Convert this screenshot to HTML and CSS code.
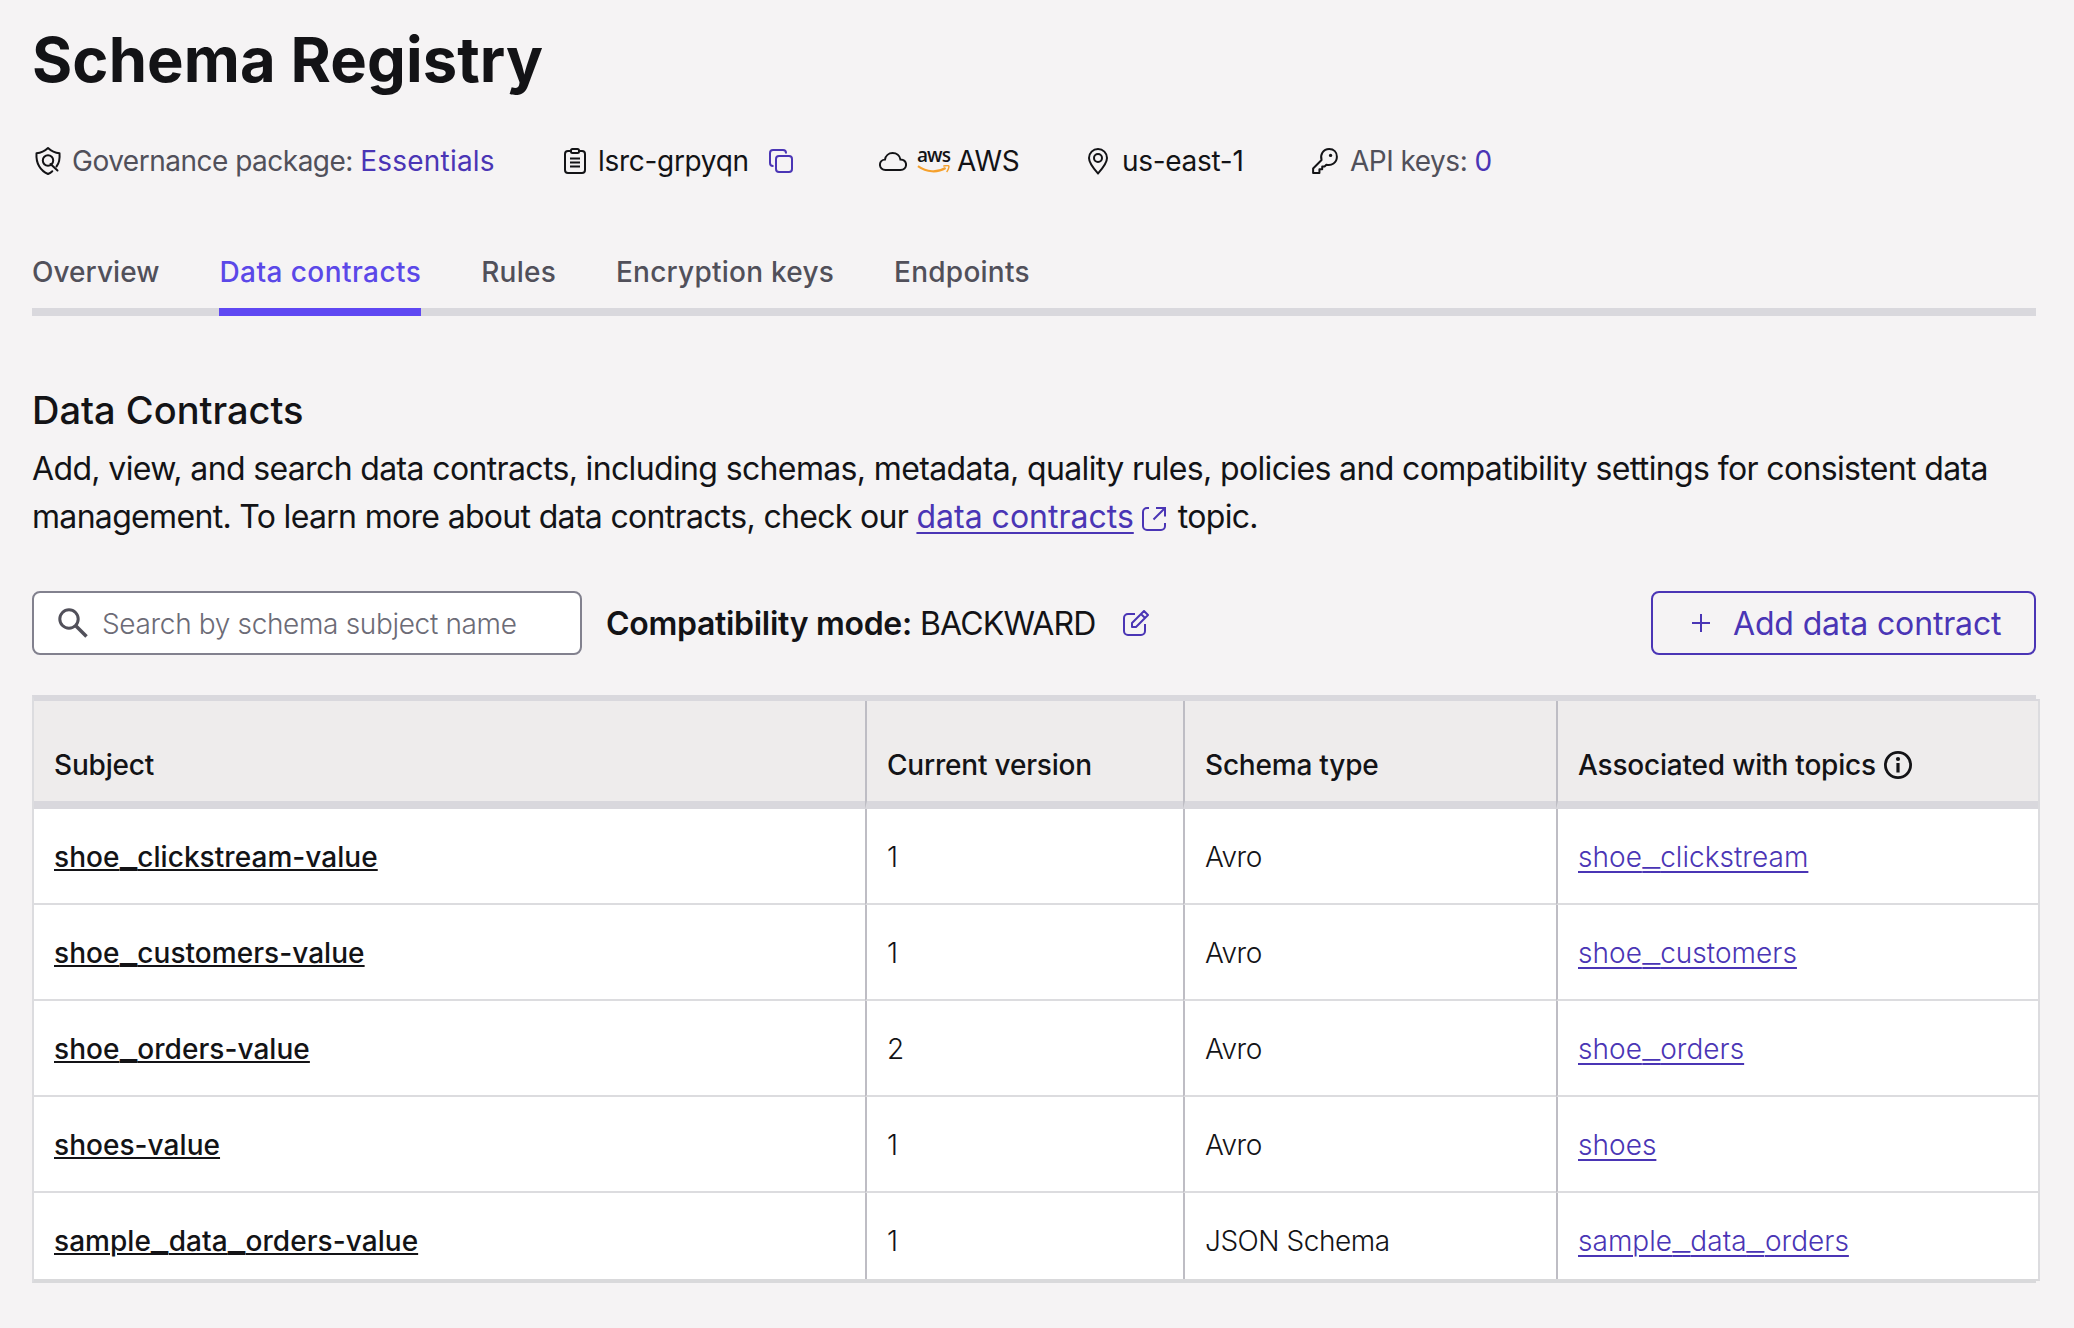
FILE: index.html
```html
<!DOCTYPE html>
<html lang="en">
<head>
<meta charset="utf-8">
<title>Schema Registry</title>
<link rel="stylesheet" href="styles.css">
</head>
<body>
<main class="page">
  <h1 class="title">Schema Registry</h1>

  <div class="meta">
    <div class="meta-item meta-governance">
      <svg class="icon" width="28" height="30" viewBox="0 0 28 30" fill="none" stroke="currentColor" stroke-width="2" stroke-linejoin="round" stroke-linecap="round"><path d="M22.500 20.500C25 17.500 26 13 25.500 7.200C21 6.800 17 4.800 14 2C11 4.800 7 6.800 2.500 7.200C1.800 17.500 6.500 25 14 28C15.600 27.300 17 26.400 18.300 25.200"/><circle cx="14" cy="14.500" r="5.200"/><path d="M16.500 18L23.500 24.500"/></svg>
      <span class="label">Governance package: <a class="value-link">Essentials</a></span>
    </div>
    <div class="meta-item meta-id">
      <svg class="icon" width="22" height="26" viewBox="0 0 22 26" fill="none" stroke="currentColor" stroke-width="2"><rect x="1" y="3" width="20" height="22" rx="3"/><rect x="7" y="1" width="8" height="4" rx="1.500" fill="#f5f3f4"/><path d="M6 10.500h10M6 14.500h10M6 18.500h10"/></svg>
      <span>lsrc-grpyqn</span>
      <svg class="icon copy" width="24" height="24" viewBox="0 0 24 24" fill="none" stroke="currentColor" stroke-width="2"><rect x="7" y="7" width="16" height="16" rx="3"/><path d="M4.500 17H4a3 3 0 0 1-3-3V4a3 3 0 0 1 3-3h10a3 3 0 0 1 3 3v.5"/></svg>
    </div>
    <div class="meta-item meta-cloud">
      <svg class="icon" width="28" height="19" viewBox="0 0 30 20" fill="none" stroke="currentColor" stroke-width="2.100"><path d="M7 19C3.500 19 1 16.700 1 13.500C1 10.500 3.200 8.200 6.400 8C7 4 10.300 1 14.600 1C18.900 1 22.200 3.800 22.900 7.800C26.500 8 29 10.200 29 13.500C29 16.700 26.500 19 23 19Z"/></svg>
      <span class="aws-logo"><span class="aws-word">aws</span><svg width="33" height="9" viewBox="0 0 34 9"><path d="M1 1C10 7.500 21 8 29.500 3" fill="none" stroke="#f5a02c" stroke-width="2.200"/><path d="M27 1C30 0.200 32.500 0.500 32.800 1C33.200 2 32 5.500 30.500 7" fill="none" stroke="#f5a02c" stroke-width="1.500"/></svg></span>
      <span>AWS</span>
    </div>
    <div class="meta-item meta-region">
      <svg class="icon" width="20" height="27" viewBox="0 0 20 27" fill="none" stroke="currentColor" stroke-width="2" stroke-linejoin="round"><path d="M10 25.500C7 22 1 15.500 1 10a9 9 0 0 1 18 0C19 15.500 13 22 10 25.500Z"/><circle cx="10" cy="10" r="4"/></svg>
      <span>us-east-1</span>
    </div>
    <div class="meta-item meta-keys">
      <svg class="icon" width="26" height="26" viewBox="0 0 28 28" fill="none" stroke="currentColor" stroke-width="2.150" stroke-linejoin="round"><path d="M10.300 13C8.500 7 12 1.200 18.500 1.200C23.500 1.200 26.800 4.500 26.800 9.500C26.800 16 21 19.500 15.500 18L13.500 20H11V23H8V26.800H1.200V22Z"/><circle cx="20" cy="8" r="1.800" fill="currentColor" stroke="none"/></svg>
      <span class="label">API keys: <a class="value-link">0</a></span>
    </div>
  </div>

  <nav class="tabs">
    <a class="tab tab-overview">Overview</a>
    <a class="tab tab-contracts active">Data contracts</a>
    <a class="tab tab-rules">Rules</a>
    <a class="tab tab-encryption">Encryption keys</a>
    <a class="tab tab-endpoints">Endpoints</a>
  </nav>

  <h2 class="section-title">Data Contracts</h2>
  <p class="description"><span class="line">Add, view, and search data contracts, including schemas, metadata, quality rules, policies and compatibility settings for consistent data</span> <span class="line line-two">management. To learn more about data contracts, check our <a class="doc-link">data contracts</a><svg class="external" width="24" height="24" viewBox="0 0 24 24" fill="none" stroke="currentColor" stroke-width="2"><path d="M7 1H5a4 4 0 0 0-4 4V19a4 4 0 0 0 4 4H19a4 4 0 0 0 4-4V16M14 1H23V9.500M23 1L11.500 12.500"/></svg><span>topic.</span></span></p>

  <div class="toolbar">
    <div class="search">
      <svg width="30" height="30" viewBox="0 0 30 30" fill="none" stroke="currentColor" stroke-width="3"><circle cx="11" cy="11" r="9.200"/><path d="M17.500 17.500L28.500 28.500" stroke-width="3.600"/></svg>
      <span>Search by schema subject name</span>
    </div>
    <div class="compat"><strong>Compatibility mode:</strong> <span>BACKWARD</span></div>
    <svg class="edit" width="26" height="26" viewBox="0 0 26 26" fill="none" stroke="currentColor" stroke-width="2" stroke-linejoin="round"><path d="M12 4H5a4 4 0 0 0-4 4V21a4 4 0 0 0 4 4H18a4 4 0 0 0 4-4V14M9 17V13L21 1L25 5L13 17ZM18 4L22 8"/></svg>
    <button class="add"><svg width="18" height="18" viewBox="0 0 18 18" stroke="currentColor" stroke-width="2"><path d="M9 0V18M0 9H18"/></svg><span>Add data contract</span></button>
  </div>

  <div class="table-frame">
    <table class="table">
      <colgroup><col class="c1"><col class="c2"><col class="c3"><col class="c4"></colgroup>
      <thead>
        <tr><th>Subject</th><th>Current version</th><th>Schema type</th><th><span class="with-icon">Associated with topics <svg width="28" height="28" viewBox="0 0 28 28" fill="none" stroke="currentColor" stroke-width="2.800"><circle cx="14" cy="14" r="12.600"/><path d="M14 12V21.500" stroke-width="3.200"/><circle cx="14" cy="8" r="2.100" fill="currentColor" stroke="none"/></svg></span></th></tr>
      </thead>
      <tbody>
        <tr><td><a class="subject">shoe<span class="u">_</span>clickstream-value</a></td><td>1</td><td>Avro</td><td><a class="topic">shoe<span class="u">_</span>clickstream</a></td></tr>
        <tr><td><a class="subject">shoe<span class="u">_</span>customers-value</a></td><td>1</td><td>Avro</td><td><a class="topic">shoe<span class="u">_</span>customers</a></td></tr>
        <tr><td><a class="subject">shoe<span class="u">_</span>orders-value</a></td><td>2</td><td>Avro</td><td><a class="topic">shoe<span class="u">_</span>orders</a></td></tr>
        <tr><td><a class="subject">shoes-value</a></td><td>1</td><td>Avro</td><td><a class="topic">shoes</a></td></tr>
        <tr><td><a class="subject">sample<span class="u">_</span>data<span class="u">_</span>orders-value</a></td><td>1</td><td>JSON Schema</td><td><a class="topic">sample<span class="u">_</span>data<span class="u">_</span>orders</a></td></tr>
      </tbody>
    </table>
  </div>
</main>
</body>
</html>
```

FILE: styles.css
```css
* { box-sizing: border-box; }
body {
  margin: 0;
  background: #f5f3f4;
  color: #131316;
  font-family: Inter, "Liberation Sans", sans-serif;
  font-size: 28px;
}
svg { display: block; flex: none; }
.page { width: 2036px; padding-left: 32px; display: flex; flex-direction: column; }
.title { margin: 22px 0 0; height: 76px; line-height: 76px; font-size: 61.5px; font-weight: 700; letter-spacing: 0.1px; white-space: nowrap; }

.meta { display: flex; align-items: center; height: 40px; margin-top: 43px; white-space: nowrap; letter-spacing: -0.3px; }
.meta-item { display: flex; align-items: center; gap: 12px; }
.label { color: #51505a; letter-spacing: -0.5px; }
.value-link { color: #4a35b5; letter-spacing: 0.2px; }
.meta-governance { width: 532px; padding-left: 2px; gap: 10px; }
.meta-id { width: 315px; }
.meta-id .copy { margin-left: 8px; color: #4a35b5; }
.meta-cloud { width: 209px; gap: 10px; }
.meta-region { width: 222px; gap: 14px; }
.meta-keys { padding-left: 2px; }
.aws-logo { width: 33px; margin-right: -3px; display: flex; flex-direction: column; font: 600 19px/15px "Open Sans", sans-serif; letter-spacing: -0.9px; }
.aws-word { height: 17px; }

.tabs { display: flex; gap: 60px; margin-top: 66px; height: 69px; border-bottom: 8px solid #d9d8dd; }
.tab { height: 69px; line-height: 51px; color: #51505a; font-weight: 500; letter-spacing: 0.24px; border-bottom: 8px solid transparent; white-space: nowrap; }
.tab-overview { letter-spacing: 0.05px; }
.tab.active { color: #5b48e8; letter-spacing: 0.43px; border-bottom-color: #5f48f2; }

.section-title { margin: 69px 0 0; height: 50px; line-height: 50px; font-size: 38px; font-weight: 500; white-space: nowrap; }
.description { margin: 10px 0 0; font-size: 32px; line-height: 48px; letter-spacing: -0.64px; white-space: nowrap; }
.line { display: flex; align-items: baseline; white-space: pre; }
.line-two { letter-spacing: -0.68px; }
.doc-link { color: #4a35b5; letter-spacing: 0; text-decoration: underline; text-decoration-thickness: 2px; text-underline-offset: 4px; }
.external { color: #4a35b5; margin: 4px 12px 0 8px; align-self: center; }

.toolbar { display: flex; align-items: center; margin-top: 50px; height: 64px; }
.search { width: 550px; height: 64px; border: 2px solid #82818e; border-radius: 8px; background: #fff; display: flex; align-items: center; gap: 14px; padding-left: 24px; color: #51505a; }
.search span { padding-top: 2px; color: #6c6b76; font-weight: 300; letter-spacing: -0.34px; white-space: nowrap; }
.compat { margin-left: 24px; font-size: 32px; letter-spacing: -0.85px; white-space: nowrap; }
.compat strong { font-weight: 600; letter-spacing: -0.3px; }
.edit { margin-left: 27px; color: #4a35b5; }
.add { margin-left: auto; width: 385px; height: 64px; border: 2px solid #4a35b5; border-radius: 8px; background: transparent; color: #4a35b5; font: 400 32px Inter, sans-serif; letter-spacing: -0.16px; display: flex; align-items: center; gap: 23px; padding: 0 0 0 39px; white-space: nowrap; }

.table-frame { margin-top: 40px; height: 588px; border-top: 4px solid #d9d8dd; border-bottom: 2px solid #d9d9db; border-left: 2px solid #dcdcdf; }
.table { table-layout: fixed; width: 2006px; border-collapse: separate; border-spacing: 0; border-top: 2px solid #d9d8dd; border-right: 2px solid #dcdcdf; border-bottom: 2px solid #d9d9db; background: #fff; }
.c1 { width: 831px; }
.c2 { width: 318px; }
.c3 { width: 373px; }
th { height: 108px; padding: 28px 0 0 20px; text-align: left; font-weight: 500; letter-spacing: -0.2px; background: #eeecec; border-bottom: 8px solid #d9d8dd; }
td { height: 96px; padding: 2px 0 0 20px; border-bottom: 2px solid #dcdcdf; font-weight: 300; letter-spacing: -0.48px; }
th + th, td + td { border-left: 2px solid #bebdc4; }
tr:last-child td { height: 86px; border-bottom: 0; padding-top: 10px; }
.with-icon { display: flex; align-items: center; gap: 8px; height: 34px; }
.subject { color: #131316; font-weight: 500; letter-spacing: 0.05px; text-decoration: underline; text-decoration-thickness: 2px; text-underline-offset: 2px; }
.topic { color: #4a35b5; letter-spacing: 0.03px; text-decoration: underline; text-decoration-thickness: 2px; text-underline-offset: 4px; }
/* Underscores in identifiers are drawn wide enough to meet their neighbours. */
.u { display: inline-block; margin: 0 2.850px; transform: scaleX(1.440); text-decoration: underline; text-decoration-thickness: 2px; text-underline-offset: inherit; }
.subject .u { margin: 0 2.400px; transform: scaleX(1.360); }
```
